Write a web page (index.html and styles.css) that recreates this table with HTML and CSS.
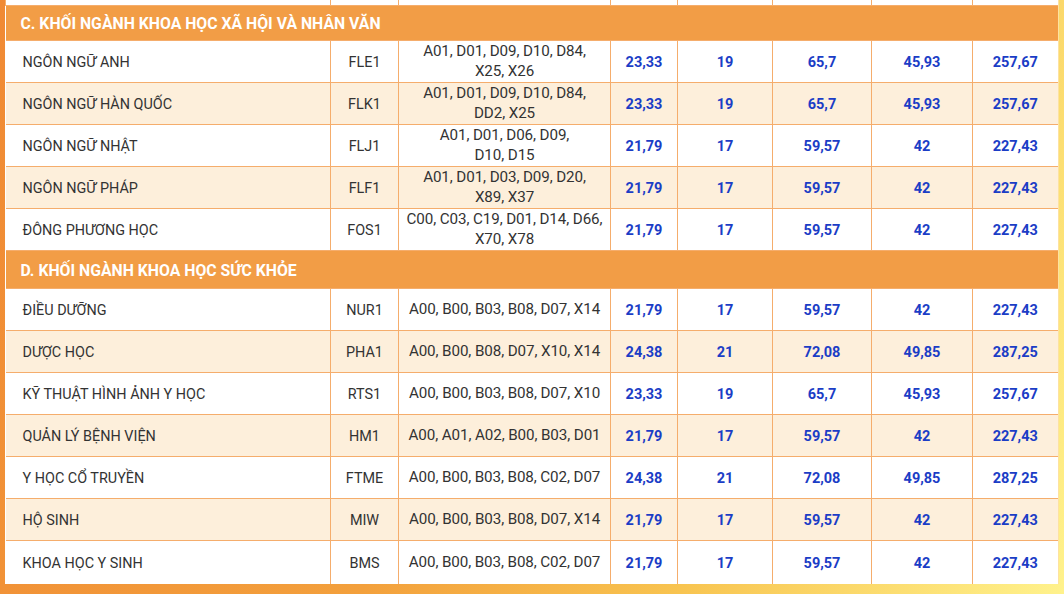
FILE: index.html
```html
<!DOCTYPE html>
<html lang="vi">
<head>
<meta charset="utf-8">
<title>Điểm chuẩn</title>
<link rel="stylesheet" href="styles.css">
</head>
<body>
<div class="frame">
<table class="scores">
<colgroup>
<col class="c-name"><col class="c-code"><col class="c-combo"><col class="c-a"><col class="c-b"><col class="c-c"><col class="c-d"><col class="c-e">
</colgroup>
<tbody>
<tr class="tail"><td></td><td></td><td></td><td></td><td></td><td></td><td></td><td></td></tr>
<tr class="section"><td colspan="8">C. KHỐI NGÀNH KHOA HỌC XÃ HỘI VÀ NHÂN VĂN</td></tr>
<tr class="r1"><td class="name">NGÔN NGỮ ANH</td><td class="code">FLE1</td><td class="combo">A01, D01, D09, D10, D84,<br>X25, X26</td><td class="num">23,33</td><td class="num">19</td><td class="num">65,7</td><td class="num">45,93</td><td class="num">257,67</td></tr>
<tr class="alt"><td class="name">NGÔN NGỮ HÀN QUỐC</td><td class="code">FLK1</td><td class="combo">A01, D01, D09, D10, D84,<br>DD2, X25</td><td class="num">23,33</td><td class="num">19</td><td class="num">65,7</td><td class="num">45,93</td><td class="num">257,67</td></tr>
<tr><td class="name">NGÔN NGỮ NHẬT</td><td class="code">FLJ1</td><td class="combo">A01, D01, D06, D09,<br>D10, D15</td><td class="num">21,79</td><td class="num">17</td><td class="num">59,57</td><td class="num">42</td><td class="num">227,43</td></tr>
<tr class="alt"><td class="name">NGÔN NGỮ PHÁP</td><td class="code">FLF1</td><td class="combo">A01, D01, D03, D09, D20,<br>X89, X37</td><td class="num">21,79</td><td class="num">17</td><td class="num">59,57</td><td class="num">42</td><td class="num">227,43</td></tr>
<tr><td class="name">ĐÔNG PHƯƠNG HỌC</td><td class="code">FOS1</td><td class="combo">C00, C03, C19, D01, D14, D66,<br>X70, X78</td><td class="num">21,79</td><td class="num">17</td><td class="num">59,57</td><td class="num">42</td><td class="num">227,43</td></tr>
<tr class="section sec-d"><td colspan="8">D. KHỐI NGÀNH KHOA HỌC SỨC KHỎE</td></tr>
<tr><td class="name">ĐIỀU DƯỠNG</td><td class="code">NUR1</td><td class="combo">A00, B00, B03, B08, D07, X14</td><td class="num">21,79</td><td class="num">17</td><td class="num">59,57</td><td class="num">42</td><td class="num">227,43</td></tr>
<tr class="alt"><td class="name">DƯỢC HỌC</td><td class="code">PHA1</td><td class="combo">A00, B00, B08, D07, X10, X14</td><td class="num">24,38</td><td class="num">21</td><td class="num">72,08</td><td class="num">49,85</td><td class="num">287,25</td></tr>
<tr><td class="name">KỸ THUẬT HÌNH ẢNH Y HỌC</td><td class="code">RTS1</td><td class="combo">A00, B00, B03, B08, D07, X10</td><td class="num">23,33</td><td class="num">19</td><td class="num">65,7</td><td class="num">45,93</td><td class="num">257,67</td></tr>
<tr class="alt"><td class="name">QUẢN LÝ BỆNH VIỆN</td><td class="code">HM1</td><td class="combo">A00, A01, A02, B00, B03, D01</td><td class="num">21,79</td><td class="num">17</td><td class="num">59,57</td><td class="num">42</td><td class="num">227,43</td></tr>
<tr><td class="name">Y HỌC CỔ TRUYỀN</td><td class="code">FTME</td><td class="combo">A00, B00, B03, B08, C02, D07</td><td class="num">24,38</td><td class="num">21</td><td class="num">72,08</td><td class="num">49,85</td><td class="num">287,25</td></tr>
<tr class="alt"><td class="name">HỘ SINH</td><td class="code">MIW</td><td class="combo">A00, B00, B03, B08, D07, X14</td><td class="num">21,79</td><td class="num">17</td><td class="num">59,57</td><td class="num">42</td><td class="num">227,43</td></tr>
<tr><td class="name">KHOA HỌC Y SINH</td><td class="code">BMS</td><td class="combo">A00, B00, B03, B08, C02, D07</td><td class="num">21,79</td><td class="num">17</td><td class="num">59,57</td><td class="num">42</td><td class="num">227,43</td></tr>
</tbody>
</table>
</div>
</body>
</html>
```

FILE: styles.css
```css
html, body {
  margin: 0;
  padding: 0;
}
body {
  width: 1064px;
  height: 594px;
  overflow: hidden;
  background: linear-gradient(110deg, #f08a34 0%, #f3a03c 45%, #f8c450 70%, #fff28c 100%);
  font-family: Roboto, "Noto Sans", sans-serif;
}
.frame {
  margin: 0 6px 0 5px;
  padding-right: 1px;
  background: #fde2a0;
  width: 1053px;
}
.scores {
  width: 1052px;
  border-collapse: collapse;
  table-layout: fixed;
  background: #fff;
  font-size: 14.4px;
  color: #333;
}
.c-name { width: 325px; }
.c-code { width: 68px; }
.c-combo { width: 212px; }
.c-a { width: 67px; }
.c-b { width: 95px; }
.c-c { width: 99px; }
.c-d { width: 101px; }
.c-e { width: 85px; }
.scores td {
  border: 1px solid #f5ad6c;
  height: 42px;
  padding: 3px 0 0;
  text-align: center;
  line-height: 18px;
  box-sizing: border-box;
}
.scores tr.tail td {
  height: 5px;
  padding: 0;
  border-top: none;
}
.scores tr.section td {
  background: #f29d46;
  color: #fff;
  font-weight: 700;
  font-size: 15.8px;
  text-align: left;
  padding: 3px 0 0 15px;
  height: 35px;
  border-left: none;
}
.scores tr.sec-d td {
  height: 38px;
}
.scores tr.alt td {
  background: #fdefdb;
}
.scores td.name {
  text-align: left;
  padding-left: 17px;
  border-left: none;
}
.scores td.combo {
  font-size: 15.2px;
  line-height: 20px;
  letter-spacing: -0.1px;
  padding-top: 0;
}
.scores td.num {
  color: #1b3dc6;
  font-weight: 700;
  font-size: 14.5px;
}
.scores td:last-child {
  border-right: none;
}
.scores tr:last-child td {
  border-bottom: none;
  height: 44px;
}
```
